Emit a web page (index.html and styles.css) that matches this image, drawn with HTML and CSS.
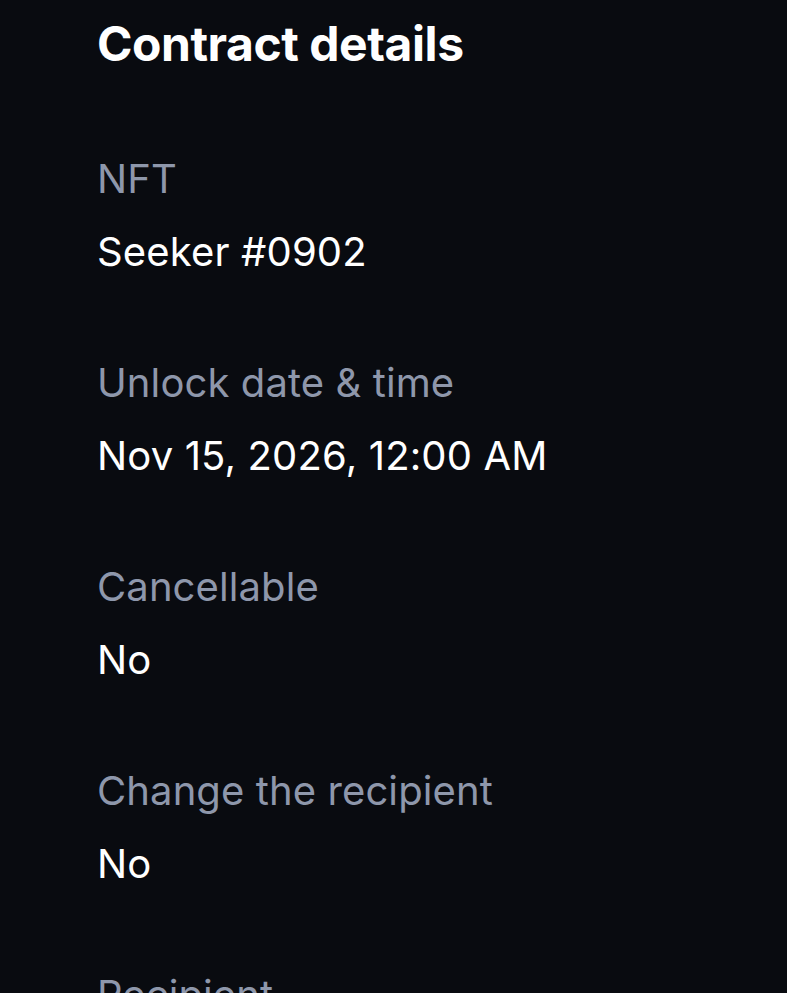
FILE: index.html
```html
<!DOCTYPE html>
<html lang="en">
<head>
<meta charset="utf-8">
<title>Contract details</title>
<link rel="stylesheet" href="styles.css">
</head>
<body>
<main class="page">
  <h1 class="title">Contract details</h1>
  <dl class="details">
    <div class="item">
      <dt class="label">NFT</dt>
      <dd class="value">Seeker #0902</dd>
    </div>
    <div class="item">
      <dt class="label">Unlock date &amp; time</dt>
      <dd class="value">Nov 15, 2026, 12:00 AM</dd>
    </div>
    <div class="item">
      <dt class="label">Cancellable</dt>
      <dd class="value">No</dd>
    </div>
    <div class="item">
      <dt class="label">Change the recipient</dt>
      <dd class="value">No</dd>
    </div>
    <div class="item">
      <dt class="label">Recipient</dt>
      <dd class="value">&nbsp;</dd>
    </div>
  </dl>
</main>
</body>
</html>
```

FILE: styles.css
```css
html, body {
  margin: 0;
  padding: 0;
  background: #090b10;
  overflow: hidden;
}
body {
  font-family: Inter, "Noto Sans", sans-serif;
  color: #ffffff;
}
.page {
  padding: 15px 0 0 97px;
  height: 993px;
  box-sizing: border-box;
}
.title {
  margin: 0;
  font-size: 48px;
  line-height: 58px;
  font-weight: 700;
  letter-spacing: -0.45px;
}
.details {
  margin: 76px 0 0 0;
  display: flex;
  flex-direction: column;
  gap: 71px;
}
.item {
  display: flex;
  flex-direction: column;
  gap: 13px;
}
.label {
  margin: 0;
  font-size: 40px;
  line-height: 60px;
  color: #8e97ab;
  letter-spacing: 0.1px;
}
.value {
  margin: 0;
  font-size: 40px;
  line-height: 60px;
  color: #ffffff;
  letter-spacing: 0.15px;
}
```
